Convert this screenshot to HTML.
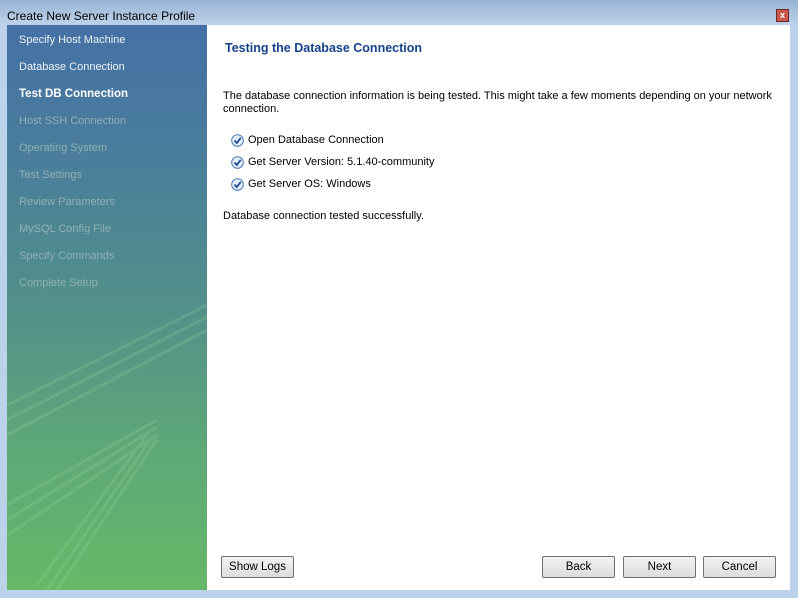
<!DOCTYPE html>
<html><head><style>
body{margin:0;width:798px;height:598px;overflow:hidden;font-family:"Liberation Sans",sans-serif;position:relative;background:#bcd1ea}
.title{position:absolute;left:0;top:0;width:798px;height:25px;background:linear-gradient(#98b4d5,#bdd2ea);}
.title span{position:absolute;left:7px;top:9px;font-size:12px;color:#000}
.close{position:absolute;left:776px;top:9px;width:11px;height:11px;background:#c8574a;border:1px solid #6b2a25;color:#fff;font-size:9px;line-height:11px;text-align:center;font-weight:bold}
.side{position:absolute;left:7px;top:25px;width:200px;height:565px;background:linear-gradient(#4570a6 0%,#4a7f9a 25%,#52908a 50%,#5ea878 75%,#66b868 100%);overflow:hidden}
.side div{position:absolute;left:12px;font-size:11px;color:#eef3f8}
.side .dim{color:#8fb0b6}
.main{position:absolute;left:207px;top:25px;width:583px;height:565px;background:#fff}
.t{position:absolute;font-size:11px;color:#000}
.btn{position:absolute;top:531px;height:20px;border:1px solid #707070;border-radius:2px;background:linear-gradient(#f4f4f4,#dcdcdc);font-size:11.5px;text-align:center;line-height:21px}
.ck{position:absolute;left:24px;width:13px;height:13px}
</style></head><body>
<div class="title"><span>Create New Server Instance Profile</span><div class="close">x</div></div>
<div class="side">
<svg width="200" height="565" style="position:absolute;left:0;top:0;opacity:.2">
<g stroke="#9fe0a0" stroke-width="3" fill="none">
<path d="M0 380 L200 280"/><path d="M0 395 L200 292"/><path d="M0 410 L200 305"/>
<path d="M0 480 L150 395"/><path d="M0 495 L150 402"/><path d="M0 510 L150 410"/>
<path d="M30 560 L140 410"/><path d="M40 565 L145 412"/><path d="M50 565 L150 414"/>
</g></svg>
<div style="top:9px">Specify Host Machine</div>
<div style="top:36px">Database Connection</div>
<div style="top:63px;font-weight:bold;color:#fff;font-size:11.5px">Test DB Connection</div>
<div class="dim" style="top:90px">Host SSH Connection</div>
<div class="dim" style="top:117px">Operating System</div>
<div class="dim" style="top:144px">Test Settings</div>
<div class="dim" style="top:171px">Review Parameters</div>
<div class="dim" style="top:198px">MySQL Config File</div>
<div class="dim" style="top:225px">Specify Commands</div>
<div class="dim" style="top:252px">Complete Setup</div>
</div>
<div class="main">
<div class="t" style="left:18px;top:16px;font-size:12.5px;font-weight:bold;color:#15428b">Testing the Database Connection</div>
<div class="t" style="left:16px;top:65px;width:562px;line-height:13px">The database connection information is being tested. This might take a few moments depending on your network connection.</div>
<svg class="ck" style="top:109px" viewBox="0 0 13 13"><circle cx="6.5" cy="6.5" r="5.8" fill="#e4eefa" stroke="#4a78b0"/><path d="M3.5 6.5 L5.8 9 L9.8 3.8" stroke="#1d4f94" stroke-width="1.8" fill="none"/></svg>
<div class="t" style="left:41px;top:109px">Open Database Connection</div>
<svg class="ck" style="top:131px" viewBox="0 0 13 13"><circle cx="6.5" cy="6.5" r="5.8" fill="#e4eefa" stroke="#4a78b0"/><path d="M3.5 6.5 L5.8 9 L9.8 3.8" stroke="#1d4f94" stroke-width="1.8" fill="none"/></svg>
<div class="t" style="left:41px;top:131px">Get Server Version: 5.1.40-community</div>
<svg class="ck" style="top:153px" viewBox="0 0 13 13"><circle cx="6.5" cy="6.5" r="5.8" fill="#e4eefa" stroke="#4a78b0"/><path d="M3.5 6.5 L5.8 9 L9.8 3.8" stroke="#1d4f94" stroke-width="1.8" fill="none"/></svg>
<div class="t" style="left:41px;top:153px">Get Server OS: Windows</div>
<div class="t" style="left:16px;top:185px">Database connection tested successfully.</div>
<div class="btn" style="left:14px;width:71px">Show Logs</div>
<div class="btn" style="left:335px;width:71px">Back</div>
<div class="btn" style="left:416px;width:71px">Next</div>
<div class="btn" style="left:496px;width:71px">Cancel</div>
</div>
</body></html>
